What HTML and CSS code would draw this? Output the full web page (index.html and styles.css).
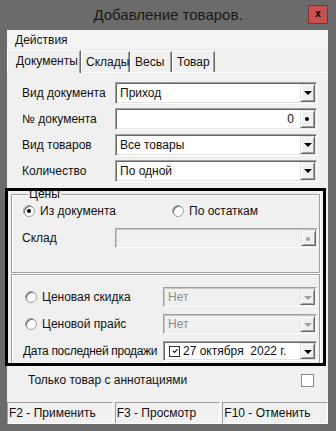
FILE: index.html
```html
<!DOCTYPE html>
<html lang="ru">

<head>
  <meta charset="UTF-8">
  <meta name="viewport" content="width=device-width, initial-scale=1.0">
  <title>Добавление товаров.</title>
  <link rel="stylesheet" href="styles.css">
</head>

<body>
  <div class="titlebar">
    <span></span>
    <span class="title">Добавление товаров.</span>
    <span class="close">x</span>
  </div>
  <div class="window">
    <div class="menubar">Действия</div>
    <div class="tabs">
      <div class="tab tab-active">Документы</div>
      <div class="tab">Склады</div>
      <div class="tab">Весы</div>
      <div class="tab">Товар</div>
    </div>
    <div class="page">
      <div class="rows">
        <div class="row">
          <span class="label">Вид документа</span>
          <div class="combo"><span class="value">Приход</span><span class="btn btn-dd"></span></div>
        </div>
        <div class="row">
          <span class="label">№ документа</span>
          <div class="combo"><span class="value value-num">0</span><span class="btn btn-dot"></span></div>
        </div>
        <div class="row">
          <span class="label">Вид товаров</span>
          <div class="combo"><span class="value">Все товары</span><span class="btn btn-dd"></span></div>
        </div>
        <div class="row">
          <span class="label">Количество</span>
          <div class="combo"><span class="value">По одной</span><span class="btn btn-dd"></span></div>
        </div>
      </div>
      <div class="frame">
        <fieldset class="group group-prices">
          <legend>Цены</legend>
          <div class="radios">
            <span class="radio radio-first"><i class="dot dot-on"></i>Из документа</span>
            <span class="radio"><i class="dot"></i>По остаткам</span>
          </div>
          <div class="row row-small">
            <span class="label">Склад</span>
            <div class="combo combo-off"><span class="value"></span><span class="btn btn-dot btn-off"></span></div>
          </div>
        </fieldset>
        <fieldset class="group group-extra">
          <div class="row row-small">
            <span class="radio label-wide"><i class="dot"></i>Ценовая скидка</span>
            <div class="combo combo-off"><span class="value">Нет</span><span class="btn btn-dd btn-off"></span></div>
          </div>
          <div class="row row-small">
            <span class="radio label-wide"><i class="dot"></i>Ценовой прайс</span>
            <div class="combo combo-off"><span class="value">Нет</span><span class="btn btn-dd btn-off"></span></div>
          </div>
          <div class="row row-small">
            <span class="label label-wide label-date">Дата последней продажи</span>
            <div class="combo">
              <span class="value value-date"><i class="tick"></i>27 октября  2022 г.</span>
              <span class="btn btn-dd"></span>
            </div>
          </div>
        </fieldset>
      </div>
      <div class="check-row">
        <span>Только товар с аннотациями</span>
        <span class="checkbox"></span>
      </div>
    </div>
    <div class="statusbar">
      <div class="pane">F2 - Применить</div>
      <div class="pane">F3 - Просмотр</div>
      <div class="pane">F10 - Отменить</div>
    </div>
  </div>
</body>

</html>
```

FILE: styles.css
```css
*,
*::before,
*::after {
  margin: 0;
  padding: 0;
  box-sizing: border-box;
}
body {
  width: 336px;
  height: 431px;
  background: #6b6b6b;
  font-family: "Liberation Sans", Arial, sans-serif;
  font-size: 12px;
  color: #111;
  overflow: hidden;
}
.titlebar {
  display: grid;
  grid-template-columns: 1fr auto 1fr;
  align-items: center;
  height: 30px;
}
.title {
  font-size: 15px;
  color: #1a1a1a;
  padding-bottom: 2px;
}
.close {
  justify-self: end;
  width: 20px;
  height: 19px;
  margin-right: 8px;
  margin-top: -1px;
  background: #c75050;
  border: 1px solid #7d3434;
  font-size: 10px;
  font-weight: bold;
  line-height: 16px;
  text-align: center;
  color: #000;
}
.window {
  width: 321px;
  margin-left: 7px;
  background: #f0f0f0;
}
.menubar {
  height: 18px;
  line-height: 20px;
  padding-left: 8px;
  background: #f4f4f4;
}
.tabs {
  display: flex;
  align-items: flex-end;
  height: 24px;
  padding-top: 1px;
}
.tab {
  height: 21px;
  line-height: 20px;
  padding: 0 4px;
  border-top: 1px solid #fff;
  border-left: 1px solid #fff;
  border-right: 1px solid #696969;
  box-shadow: inset -1px 0 #a0a0a0;
}
.tab:nth-child(2) { width: 49px; }
.tab:nth-child(3) { width: 42px; }
.tab:nth-child(4) { width: 43px; }
.tab-active {
  width: 74px;
  height: 23px;
  padding-left: 8px;
  margin-bottom: -1px;
  position: relative;
  background: #f0f0f0;
}
.page {
  border-top: 1px solid #fff;
  padding-bottom: 11px;
}
.rows {
  display: flex;
  flex-direction: column;
  gap: 4px;
  padding: 9px 11px 0 15px;
}
.row {
  display: flex;
  align-items: center;
  height: 22px;
}
.row-small {
  height: 20px;
}
.label {
  width: 93px;
  flex: none;
}
.combo {
  flex: 1;
  display: flex;
  align-items: center;
  height: 100%;
  background: #fff;
  border: 1px solid;
  border-color: #a0a0a0 #fff #fff #a0a0a0;
  box-shadow: inset 1px 1px 0 #696969, inset -1px -1px 0 #e3e3e3;
  padding: 1px;
}
.value {
  flex: 1;
  padding-left: 3px;
  white-space: pre;
}
.value-num {
  text-align: right;
  padding-right: 6px;
}
.btn {
  position: relative;
  width: 15px;
  height: 100%;
  flex: none;
  background: #f0f0f0;
  border: 1px solid;
  border-color: #e3e3e3 #696969 #696969 #e3e3e3;
  box-shadow: inset 1px 1px 0 #fff, inset -1px -1px 0 #a0a0a0;
}
.btn-dd::after {
  content: "";
  position: absolute;
  left: 3px;
  top: 6px;
  border-left: 4px solid transparent;
  border-right: 4px solid transparent;
  border-top: 4px solid #000;
}
.btn-dot::after {
  content: "";
  position: absolute;
  left: 4px;
  top: 6px;
  width: 4px;
  height: 4px;
  border-radius: 50%;
  background: #000;
}
.combo-off {
  background: #f0f0f0;
  color: #8c8c8c;
  border-color: #a0a0a0 #fff #fff #a0a0a0;
  box-shadow: inset 1px 1px 0 #c8c8c8;
}
.btn-off::after {
  border-top-color: #a0a0a0;
}
.btn-dot.btn-off::after {
  background: #a0a0a0;
}
.frame {
  margin: 6px 0 0 -2px;
  width: 321px;
  height: 178px;
  border: 3px solid #000;
  overflow: hidden;
}
.group {
  margin: 0 3px;
  border: 1px solid #a0a0a0;
  box-shadow: inset 1px 1px 0 #fff, 1px 1px 0 #fff;
  padding: 0 1px 0 10px;
}
.group legend {
  padding: 0 1px;
  margin-left: 6px;
  line-height: 14px;
}
.group-prices {
  margin-top: -4px;
  padding-bottom: 24px;
}
.radios {
  display: flex;
  align-items: center;
  height: 20px;
  margin-bottom: 7px;
}
.radio {
  display: flex;
  align-items: center;
  gap: 5px;
}
.radio-first {
  width: 149px;
  margin-left: 1px;
}
.dot {
  position: relative;
  width: 12px;
  height: 12px;
  border-radius: 50%;
  background: #fff;
  border: 1px solid #a0a0a0;
  box-shadow: inset 1px 1px 0 #696969;
}
.dot-on::after {
  content: "";
  position: absolute;
  left: 3px;
  top: 3px;
  width: 4px;
  height: 4px;
  border-radius: 50%;
  background: #000;
}
.group-extra {
  margin-top: 1px;
  height: 100px;
  padding-top: 12px;
  padding-right: 2px;
  display: flex;
  flex-direction: column;
  gap: 7px;
}
.group-extra .radio {
  padding-left: 3px;
}
.label-wide {
  width: 141px;
  flex: none;
}
.label-date {
  padding-left: 1px;
  white-space: nowrap;
  letter-spacing: -0.3px;
}
.value-date {
  display: flex;
  align-items: center;
  gap: 3px;
  padding-left: 4px;
}
.tick {
  position: relative;
  width: 11px;
  height: 11px;
  border: 1px solid #333;
  background: #fff;
}
.tick::after {
  content: "";
  position: absolute;
  left: 2px;
  top: 1px;
  width: 5px;
  height: 3px;
  border-left: 1px solid #000;
  border-bottom: 1px solid #000;
  transform: rotate(-45deg) translate(0, 1px);
}
.check-row {
  display: flex;
  align-items: center;
  justify-content: space-between;
  height: 20px;
  margin-top: 4px;
  padding: 0 14px 0 21px;
}
.checkbox {
  width: 13px;
  height: 13px;
  background: #fff;
  border: 1px solid #8a8a8a;
}
.statusbar {
  display: flex;
  gap: 2px;
  height: 23px;
  padding-top: 1px;
}
.pane {
  flex: 1;
  height: 22px;
  line-height: 21px;
  padding-left: 1px;
  border: 1px solid;
  border-color: #a0a0a0 #fff #fff #a0a0a0;
}
```
